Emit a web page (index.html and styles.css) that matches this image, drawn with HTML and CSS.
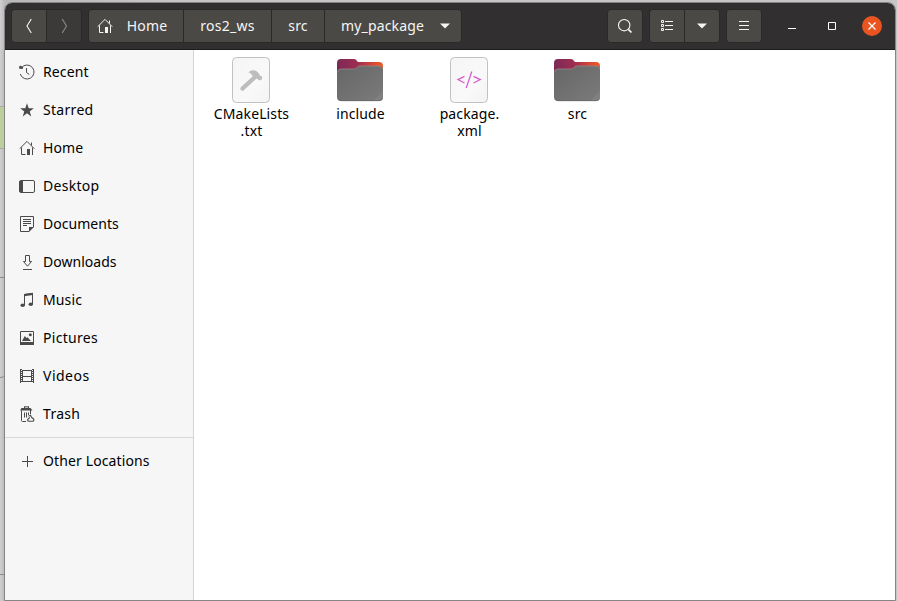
FILE: index.html
```html
<!DOCTYPE html>
<html lang="en">
<head>
<meta charset="utf-8">
<title>my_package</title>
<link rel="stylesheet" href="styles.css">
</head>
<body>
<svg width="0" height="0" class="defs">
  <defs>
    <linearGradient id="tab" x1="0" x2="1"><stop offset="0" stop-color="#7a2957"/><stop offset=".45" stop-color="#a02d4f"/><stop offset=".8" stop-color="#d94a31"/><stop offset="1" stop-color="#ef5b24"/></linearGradient>
    <linearGradient id="front" x1="0" y1="0" x2="1" y2="1"><stop offset="0" stop-color="#666"/><stop offset="1" stop-color="#7b7b7b"/></linearGradient>
    <linearGradient id="paper" x1="0" y1="0" x2="1" y2="1"><stop offset="0" stop-color="#f5f5f5"/><stop offset=".6" stop-color="#f9f9f9"/><stop offset="1" stop-color="#f3f3f3"/></linearGradient>
    <symbol id="home" viewBox="0 0 16 16"><path d="M.7 8.700 8 1.400l7.300 7.300M2.500 7.500v7h4M13.500 7.500V15M12.500 2.500v3" fill="none" stroke="currentColor"/><path d="M8 9h3v6H8z" fill="currentColor"/></symbol>
    <symbol id="folder" viewBox="0 0 48 48"><path d="M1 7Q1 3 5 3h13q2 0 3 2l1 1h21q4 0 4 4v14H1z" fill="url(#tab)"/><path d="M1 17q0-4 4-4h13q2 0 3-1.500 1-1.500 3-1.500h19q4 0 4 4v27q0 4-4 4H5q-4 0-4-4z" fill="url(#front)"/><path d="M1.500 16q.5-3 3.500-3h13q2 0 3-1.500 1-1.500 3-1.500h19q3 0 3.500 3" fill="none" stroke="#94898a" stroke-width=".8"/><path d="M47 35v6q0 4-4 4h-6z" fill="#808080"/><path d="M2 43q1 1.700 3 1.700h38q2 0 3-1.700" fill="none" stroke="#666" stroke-width=".7"/></symbol>
  </defs>
</svg>
<svg class="under" width="5" height="601">
  <path d="M0 107h4v41H0z" fill="#bccd9e"/>
  <path d="M0 106.500h4M0 148.500h4" stroke="#a8a8b2"/>
  <path d="M0 277.500h5M0 574.500h5M0 377.500q3 0 4-1.500" fill="none" stroke="#7f8c99"/>
</svg>
<div class="window">
  <header class="bar">
    <div class="group nav">
      <button class="btn" aria-label="Back"><svg width="16" height="16"><path d="M10.300 1 6 8l4.300 7" fill="none" stroke="currentColor" stroke-width="1.100"/></svg></button>
      <button class="btn off" aria-label="Forward"><svg width="16" height="16"><path d="M6.200 1l4.300 7-4.300 7" fill="none" stroke="currentColor" stroke-width="1.100"/></svg></button>
    </div>
    <div class="group path">
      <button class="btn p-home"><svg width="16" height="16"><use href="#home"/></svg><span>Home</span></button>
      <button class="btn p-ws"><span>ros2_ws</span></button>
      <button class="btn p-src"><span>src</span></button>
      <button class="btn p-pkg"><span>my_package</span><svg width="10" height="6"><path d="M0 .5h10L5 5.500z" fill="currentColor"/></svg></button>
    </div>
    <div class="tools">
      <div class="group"><button class="btn" aria-label="Search"><svg width="16" height="16"><circle cx="7.200" cy="7.200" r="5.700" fill="none" stroke="currentColor" stroke-width="1.100"/><path d="m11.300 11.300 3.200 3.200" stroke="currentColor" stroke-width="1.700"/></svg></button></div>
      <div class="group">
        <button class="btn" aria-label="List view"><svg width="16" height="16"><path d="M2.500 2.500h2v2h-2zM2.500 6.500h2v2h-2zM2.500 10.500h2v2h-2zM6 3.500h8M6 7.500h8M6 11.500h8" fill="none" stroke="currentColor"/></svg></button>
        <button class="btn" aria-label="View options"><svg width="10" height="6"><path d="M0 .5h10L5 5.500z" fill="currentColor"/></svg></button>
      </div>
      <div class="group"><button class="btn" aria-label="Menu"><svg width="16" height="16"><path d="M3 3.500h10M3 7.500h10M3 11.500h10" stroke="currentColor"/></svg></button></div>
    </div>
    <div class="controls">
      <svg width="10" height="16"><path d="M1 10.500h8" stroke="#fff"/></svg>
      <svg width="10" height="16"><path d="M1.500 4.500h7v7h-7z" fill="none" stroke="#fff"/></svg>
      <svg class="close" width="20" height="20"><circle cx="10" cy="10" r="10" fill="#e95420"/><path d="m6.500 6.500 7 7m0-7-7 7" stroke="#fff" stroke-width="1.300"/></svg>
    </div>
  </header>
  <div class="body">
    <nav class="side">
      <a><svg width="16" height="16"><path d="M2.500 3.700A7 7 0 1 1 1.300 10M7.500 4v4.500l2.800 2" fill="none" stroke="currentColor"/><path d="M.2 2.500 1.500 1.500 4.300 3.500 3.600 5 .2 4.800z" fill="currentColor"/></svg><span>Recent</span></a>
      <a class="wide"><svg width="16" height="16"><path d="m8 1.300 1.700 5h5.100l-4.100 3.100 1.600 5L8 11.300l-4.300 3.100 1.600-5-4.100-3.100h5.100z" fill="currentColor"/></svg><span>Starred</span></a>
      <a><svg width="16" height="16"><use href="#home"/></svg><span>Home</span></a>
      <a class="wide"><svg width="16" height="16"><rect x=".5" y="2.500" width="15" height="12" rx="1.500" fill="none" stroke="currentColor"/><path d="M1 3h3v11H1z" fill="currentColor"/></svg><span>Desktop</span></a>
      <a class="snug"><svg width="16" height="16"><path d="M14.500 11V.5h-13v15H10M4 3.500h8M4 5.500h8M4 7.500h8M4 9.500h4" fill="none" stroke="currentColor"/><path d="M10 11h5l-5 5z" fill="currentColor"/></svg><span>Documents</span></a>
      <a class="snug"><svg width="16" height="16"><path d="M6.500 1.500h4v6h2l-4 4.700-4-4.700h2zM4 15.500h9" fill="none" stroke="currentColor"/></svg><span>Downloads</span></a>
      <a><svg width="16" height="16"><path d="M5.500 13V2.500l8-1V12" fill="none" stroke="currentColor"/><path d="M5 2l9-1.200V3L5 4.200z" fill="currentColor"/><ellipse cx="3.700" cy="13.200" rx="2.200" ry="1.800" fill="currentColor"/><ellipse cx="11.800" cy="12.200" rx="2.200" ry="1.800" fill="currentColor"/></svg><span>Music</span></a>
      <a class="wide"><svg width="16" height="16"><path d="M1.500 1.500h13v12h-13z" fill="none" stroke="currentColor"/><path d="M1 12h14v3H1zM3 11l2.800-5L7.500 8l1-.8L12 11z" fill="currentColor"/><circle cx="11.300" cy="4.700" r="1.500" fill="currentColor"/></svg><span>Pictures</span></a>
      <a class="wider"><svg width="16" height="16"><path d="M3.500 2v12M12.500 2v12M3 2.500h10M3 8.500h10M3 13.500h10" fill="none" stroke="currentColor"/><path d="M2 1v14M14 1v14" stroke="currentColor" stroke-width="2" stroke-dasharray="1 1"/><path d="M1.500 1v14M14.500 1v14" stroke="currentColor"/></svg><span>Videos</span></a>
      <a class="wide"><svg width="16" height="16"><path d="M2.500 4.500v10q0 1 1 1H7M11.500 4v4M5.500 6.500v5M7.500 6.500v5M9.500 6.500v2.500" fill="none" stroke="currentColor"/><path d="M1 4.500 2.500 2H5V.300h5V2h1.500l2 2.500z" fill="currentColor"/><path d="M6 1.300h3" stroke="#f6f6f6" stroke-width=".8"/><path d="m9.500 10.300 2-1 1.200 2.200 1.800 1.200q1 2.300-1 2.600H10q-2-.4-1.200-2l2-1.800" fill="none" stroke="currentColor" stroke-width="1.100"/></svg><span>Trash</span></a>
      <hr>
      <a><svg width="16" height="16"><path d="M8.500 3v11M3 8.500h11" stroke="currentColor"/></svg><span>Other Locations</span></a>
    </nav>
    <main class="files">
      <figure>
        <svg width="48" height="48"><rect x="5.500" y="1.500" width="37" height="45" rx="4" fill="url(#paper)" stroke="#c1c1c1"/><path d="m14 31 12-11-3.500-3.500-1.500.2q3-3.200 7-2.200 3.500 1 5.200 5.500l1.800.2v3l-2.300 1.300-3.200-2-13 12q-1.500.8-2.700-.5-1-1.500.2-3z" fill="#bdbdbd"/></svg>
        <figcaption>CMakeLists<br>.txt</figcaption>
      </figure>
      <figure><svg width="48" height="48"><use href="#folder"/></svg><figcaption>include</figcaption></figure>
      <figure>
        <svg width="48" height="48"><rect x="5.500" y="1.500" width="37" height="45" rx="4" fill="url(#paper)" stroke="#c1c1c1"/><path d="m19.500 20.300-6.500 3.300 6.500 3.400M28.500 20.300l6.800 3.300-6.800 3.400M26.800 15.500l-5.600 16.500" fill="none" stroke="#da5fce" stroke-width="1.300"/></svg>
        <figcaption>package.<br>xml</figcaption>
      </figure>
      <figure class="last"><svg width="48" height="48"><use href="#folder"/></svg><figcaption>src</figcaption></figure>
    </main>
  </div>
</div>
</body>
</html>
```
FILE: styles.css
```css
* { box-sizing: border-box; }
body {
  margin: 0;
  width: 897px;
  height: 601px;
  padding: 2px 1px 0 4px;
  overflow: hidden;
  position: relative;
  background: linear-gradient(90deg, #d0d0d0, #b8b8b8 5px, #c6c6c6 170px, #c6c6c6);
  font: 14px/17px "Noto Sans", sans-serif;
  letter-spacing: 0.12px;
  color: #000;
}
.defs { position: absolute; }
.under { position: absolute; left: 0; top: 0; }
.window {
  position: relative;
  height: 599px;
  display: flex;
  flex-direction: column;
  border: 1px solid #858585;
  border-radius: 8px 8px 0 0;
  overflow: hidden;
  background: #fff;
}
.bar {
  height: 47px;
  flex: none;
  display: flex;
  align-items: flex-start;
  padding: 7px 13px 0 7px;
  background: #322f30;
  border-bottom: 1px solid #1d1b1c;
}
.group {
  display: flex;
  gap: 1px;
  height: 32px;
  border-radius: 4px;
  background: #2b292a;
  box-shadow: 0 0 0 1px #2a2829;
}
.btn {
  display: flex;
  align-items: center;
  justify-content: center;
  width: 34px;
  height: 32px;
  margin: 0;
  padding: 0;
  border: 0;
  background: #4a4946;
  color: #f5f5f3;
  font: inherit;
  letter-spacing: inherit;
}
.btn span { padding-bottom: 2px; }
.btn:first-child { border-radius: 3px 0 0 3px; }
.btn:last-child { border-radius: 0 3px 3px 0; }
.btn:only-child { border-radius: 3px; }
.btn.off { background: #3b3a39; color: #8d8c8a; }
.path { margin-left: 8px; }
.p-home { width: 94px; gap: 14px; padding-right: 8px; }
.p-ws { width: 87px; letter-spacing: 0.25px; }
.p-src { width: 52px; }
.p-pkg { width: 136px; gap: 16px; padding-left: 5px; letter-spacing: 0.15px; }
.tools { display: flex; gap: 8px; margin-left: auto; }
.controls { display: flex; align-items: center; height: 32px; gap: 30px; margin-left: 26px; }
.close { margin-left: -5px; }
.body { flex: 1; display: flex; min-height: 0; }
.side {
  width: 189px;
  flex: none;
  padding-top: 3px;
  background: #f6f6f6;
  border-right: 1px solid #d4d4d4;
}
.side a { display: flex; align-items: center; gap: 8px; height: 38px; padding-left: 14px; white-space: nowrap; }
.side a span { padding-bottom: 2px; }
.side .snug { letter-spacing: 0.03px; }
.side .wide { letter-spacing: 0.3px; }
.side .wider { letter-spacing: 0.5px; }
.side svg { color: #4a4a4a; }
.side hr { height: 1px; margin: 4px 0; border: 0; background: #d9d9d9; }
.files { flex: 1; display: flex; padding: 6px 0 0 2px; }
figure {
  width: 109px;
  margin: 0;
  display: flex;
  flex-direction: column;
  align-items: center;
  text-align: center;
}
figure.last { width: 107px; }
figcaption { margin-top: 1px; padding-left: 2px; }
```
